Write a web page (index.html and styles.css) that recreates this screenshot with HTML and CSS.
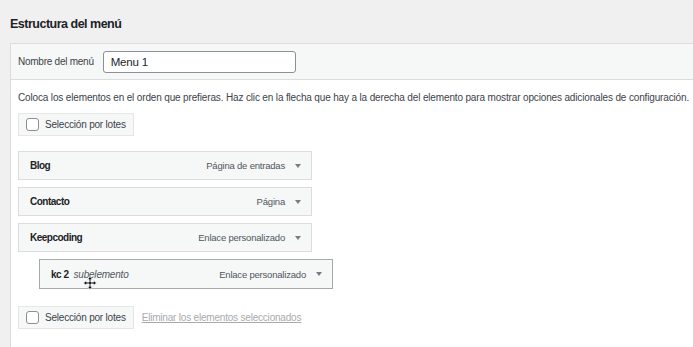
FILE: index.html
```html
<!DOCTYPE html>
<html lang="es">
<head>
  <meta charset="UTF-8" />
  <title>Menús</title>
  <link rel="stylesheet" href="styles.css">
</head>
<body>
  <div class="wrap">
    <h2>Estructura del menú</h2>
    <div class="panel">
      <div class="panel-header">
        <label for="menu-name">Nombre del menú</label>
        <input type="text" id="menu-name" value="Menu 1" />
      </div>
      <div class="panel-body">
        <p class="desc">Coloca los elementos en el orden que prefieras. Haz clic en la flecha que hay a la derecha del elemento para mostrar opciones adicionales de configuración.</p>
        <div class="bulk">
          <span class="check"></span>
          <span>Selección por lotes</span>
        </div>

        <ul class="items">
          <li class="item">
            <span class="title">Blog</span>
            <span class="type">Página de entradas</span>
            <span class="arrow"></span>
          </li>
          <li class="item">
            <span class="title">Contacto</span>
            <span class="type">Página</span>
            <span class="arrow"></span>
          </li>
          <li class="item">
            <span class="title">Keepcoding</span>
            <span class="type">Enlace personalizado</span>
            <span class="arrow"></span>
          </li>
          <li class="item sub">
            <span class="title">kc 2</span>
            <em class="sub-label">subelemento</em>
            <span class="type">Enlace personalizado</span>
            <span class="arrow"></span>
            <svg class="cursor" width="14" height="14" viewBox="0 0 14 14">
              <path d="M7 0.5 L9.6 3.4 H7.9 V6.1 H10.6 V4.4 L13.5 7 L10.6 9.6 V7.9 H7.9 V10.6 H9.6 L7 13.5 L4.4 10.6 H6.1 V7.9 H3.4 V9.6 L0.5 7 L3.4 4.4 V6.1 H6.1 V3.4 H4.4 Z" fill="#111" stroke="#fff" stroke-width="0.8"/>
            </svg>
          </li>
        </ul>

        <div class="bottom">
          <div class="bulk">
            <span class="check"></span>
            <span>Selección por lotes</span>
          </div>
          <a class="remove" href="#">Eliminar los elementos seleccionados</a>
        </div>
      </div>
    </div>
  </div>
</body>
</html>
```

FILE: styles.css
```css
body {
  margin: 0;
  background-color: #f0f0f1;
  font-family: "Liberation Sans", Arial, sans-serif;
  color: #2c3338;
  font-size: 10px;
  letter-spacing: -0.2px;
  overflow: hidden;
}
.wrap {
  padding-left: 10px;
}
h2 {
  margin: 0;
  height: 43px;
  line-height: 48px;
  font-size: 12.5px;
  letter-spacing: -0.5px;
  font-weight: bold;
  color: #1d2327;
}
.panel {
  background-color: #fff;
  border: 1px solid #dcdcde;
  border-right: none;
  border-bottom: none;
  height: 303px;
}
.panel-header {
  background-color: #f6f7f7;
  border-bottom: 1px solid #dcdcde;
  height: 35px;
  display: flex;
  align-items: center;
  padding-left: 7px;
}
.panel-header label {
  color: #3c434a;
  margin-right: 9px;
  letter-spacing: -0.25px;
}
.panel-header input {
  width: 193px;
  height: 22px;
  box-sizing: border-box;
  border: 1px solid #8c8f94;
  border-radius: 3px;
  padding: 0 7px;
  font-family: inherit;
  font-size: 11.5px;
  letter-spacing: -0.2px;
  color: #1d2327;
}
.panel-body {
  padding: 0 7px;
}
.desc {
  margin: 11px 0 0;
  line-height: 14px;
  color: #3c434a;
  letter-spacing: -0.15px;
  white-space: nowrap;
}
.bulk {
  display: inline-flex;
  align-items: center;
  gap: 6px;
  height: 21px;
  padding: 0 7px 0 7px;
  background-color: #f6f7f7;
  border: 1px solid #e6e6e7;
  color: #3c434a;
  margin-top: 8px;
}
.check {
  width: 11px;
  height: 11px;
  border: 1px solid #8c8f94;
  border-radius: 3px;
  background-color: #fff;
}
.items {
  list-style: none;
  margin: 15px 0 0;
  padding: 0;
}
.item {
  position: relative;
  width: 294px;
  height: 29px;
  box-sizing: border-box;
  display: flex;
  align-items: center;
  background-color: #f6f7f7;
  border: 1px solid #dcdcde;
  padding: 0 10px 0 11px;
  margin-bottom: 7px;
}
.item .title {
  font-weight: bold;
  letter-spacing: -0.5px;
  color: #1d2327;
}
.item .type {
  margin-left: auto;
  font-size: 9.5px;
  color: #50575e;
}
.item .arrow {
  width: 0;
  height: 0;
  border-left: 3px solid transparent;
  border-right: 3px solid transparent;
  border-top: 4px solid #787c82;
  margin-left: 10px;
}
.item.sub {
  margin-left: 21px;
  border-color: #a7aaad;
  height: 30px;
  margin-bottom: 0;
}
.sub-label {
  margin-left: 5px;
  color: #50575e;
}
.cursor {
  position: absolute;
  left: 43px;
  top: 16px;
}
.bottom {
  display: flex;
  align-items: center;
  gap: 8px;
  margin-top: 9px;
}
.remove {
  color: #a7aaad;
  margin-top: 8px;
}
```
